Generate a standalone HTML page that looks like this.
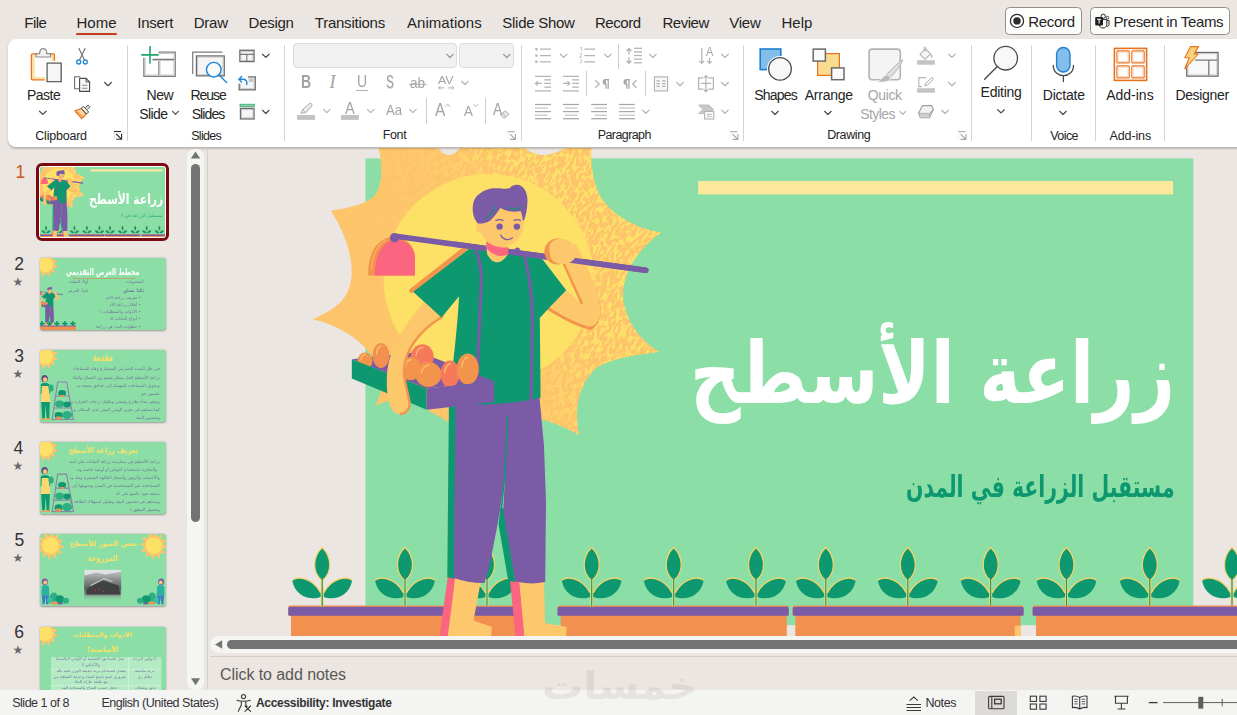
<!DOCTYPE html>
<html lang="en"><head><meta charset="utf-8"><title>PowerPoint</title>
<style>
*{margin:0;padding:0;box-sizing:border-box}
html,body{width:1237px;height:715px;overflow:hidden;background:#ebe6e2;font-family:"Liberation Sans",sans-serif}
#app{position:relative;width:1237px;height:715px;overflow:hidden;background:#ebe6e2}
.t{position:absolute;white-space:nowrap}
.abs{position:absolute}
.ar{font-family:"DejaVu Sans","Liberation Sans",sans-serif;direction:rtl}
svg{position:absolute;overflow:hidden}
svg text{font-family:"Liberation Sans",sans-serif}
svg text.ar{font-family:"DejaVu Sans","Liberation Sans",sans-serif}
</style></head>
<body><div id="app">
<svg style="left:208px;top:148px" width="1029" height="488" viewBox="208 148 1029 488">
<defs><linearGradient id="sg" gradientUnits="userSpaceOnUse" x1="380" y1="330" x2="640" y2="180"><stop offset="0" stop-color="#fdc46b"/><stop offset=".55" stop-color="#fdc66a"/><stop offset="1" stop-color="#fdd468"/></linearGradient><clipPath id="sunclip"><path id="sunp" d="M661 232.8C635 228 612 215 600 196C592 180 590 160 592 140L585 130C570 148 555 155 543 155C531 155 521 148 512 130L470 130C462 148 456 155 449 155C442 155 436 148 428 130L372 120C380 150 386 175 376 194C368 204 350 208 330.7 210.7C345 232 356 262 350 285C346 300 335 310 312.4 319.3C340 325 372 345 380 372C383 385 380 397 375 406C392 396 410 400 426 409L480 440C505 425 530 417 543.5 420C558 424 570 430 579 435C574 410 578 385 596 368C612 358 635 355 659 351.7C640 340 626 322 623 298C622 275 636 250 661 232.8Z"/></clipPath><filter id="spk" x="0" y="0" width="100%" height="100%" color-interpolation-filters="sRGB"><feTurbulence type="fractalNoise" baseFrequency="0.16 0.34" numOctaves="2" seed="7" result="n"/><feColorMatrix in="n" type="matrix" values="0 0 0 0 0.992  0 0 0 0 0.882  0 0 0 0 0.41  11 0 0 0 -5.3"/></filter><linearGradient id="mg" gradientUnits="userSpaceOnUse" x1="330" y1="330" x2="640" y2="200"><stop offset="0" stop-color="#fff" stop-opacity=".03"/><stop offset=".45" stop-color="#fff" stop-opacity=".22"/><stop offset=".7" stop-color="#fff" stop-opacity=".95"/><stop offset="1" stop-color="#fff" stop-opacity="1"/></linearGradient><mask id="spm" maskUnits="userSpaceOnUse" x="300" y="100" width="380" height="360"><rect x="300" y="100" width="380" height="360" fill="url(#mg)"/></mask></defs>
<g id="art">
<rect x="365.4" y="158.4" width="827.9" height="466.8" fill="#8bdfa6"/>
<rect x="698.2" y="181" width="474.8" height="13.4" fill="#fde99b"/>
<use href="#sunp" fill="#fdc46b"/>
<g clip-path="url(#sunclip)"><g mask="url(#spm)"><g transform="rotate(-62 488 279)"><rect x="250" y="40" width="480" height="480" filter="url(#spk)"/></g></g></g>
<circle cx="488.5" cy="279" r="105" fill="#fde066"/>
<rect x="291" y="612" width="228" height="30" fill="#f2904f"/><rect x="288.3" y="605.4" width="233.7" height="10.4" rx="1.6" fill="#f2904f"/><rect x="288.3" y="606.8" width="233.7" height="9" rx="1.6" fill="#7b5aa6"/>
<rect x="560.7" y="612" width="226.0999999999999" height="30" fill="#f2904f"/><rect x="557.5" y="605.4" width="231.29999999999995" height="10.4" rx="1.6" fill="#f2904f"/><rect x="557.5" y="606.8" width="231.29999999999995" height="9" rx="1.6" fill="#7b5aa6"/>
<path d="M457.0 580.5C460.0 576.0 477.0 576.5 485.6 592.9L485.6 597.0C475.0 601.0 460.0 596.5 457.0 580.5Z" fill="#0d9870"/><path d="M457.0 580.5C460.0 576.0 477.0 576.5 485.6 592.9" fill="none" stroke="#fdd368" stroke-width="1.3"/><path d="M517.0 580.5C514.0 576.0 497.0 576.5 488.4 592.9L488.4 597.0C499.0 601.0 514.0 596.5 517.0 580.5Z" fill="#0d9870"/><path d="M517.0 580.5C514.0 576.0 497.0 576.5 488.4 592.9" fill="none" stroke="#fdd368" stroke-width="1.3"/><path d="M487 547.5C496.5 556.5 497.5 572.5 487 580.5C476.5 572.5 477.5 556.5 487 547.5Z" fill="#0d9870" stroke="#fdd368" stroke-width="1.2"/><path d="M487 579.5V606.5" stroke="#fdd368" stroke-width="2.8" fill="none"/><path d="M487 577.5V606.5" stroke="#0d9870" stroke-width="1.1" fill="none"/>
<g id="man"><path d="M368 275.5C368.5 255 374 241 391 236.8L399 238C410 240 415 249 415 258V275.5Z" fill="#f2944c"/><path d="M374.5 275.5C375 257 380 244 394 239C408 240 415 249 415 258V275.5Z" fill="#fb6580"/><path d="M371.3 270C372 256 376 245 387 239.5" stroke="#fdb06a" stroke-width="1.2" fill="none"/><path d="M394 236L645.8 270.3" stroke="#7b5aa6" stroke-width="5.6" stroke-linecap="round"/><circle cx="394.5" cy="237.8" r="4.6" fill="#7b5aa6"/><path d="M448 575L439 640H447.6L456 575Z" fill="#fb6580"/><path d="M455.5 575L447.3 640H490.8L492 627L473.5 620.5L482 575Z" fill="#fdc76b"/><path d="M509.7 578L516 640H525L519.3 578Z" fill="#fb6580"/><path d="M519 578L524.8 640H566L566.6 627L545 623L544 578Z" fill="#fdc76b"/><path d="M449 395L447.3 577Q450 578 454 578.5L457 395Z" fill="#0d9870"/><path d="M455.7 392L453.8 578Q470 583.5 484.5 583L490 563.4L497 527L500 510.3L505 474L507.8 415.2V392Z" fill="#7b5aa6"/><path d="M500.5 508L498.5 524.3L508.3 581L515.6 582L503.5 508Z" fill="#0d9870"/><path d="M507 392L507.3 415.2L505.2 474L503.2 510.3L515.3 581.6Q530 585 545.2 582L546 502L544 446L539 392Z" fill="#7b5aa6"/><path d="M507.6 415.2L505 474L501 512" stroke="#0d9870" stroke-width="1.5" fill="none"/><path d="M599 300C603 312 600 326 590.5 330C577 327 560 318 547 309.5L548 305L590 322Z" fill="#f2944c"/><path d="M575 243C586 262 598 290 600.5 308C601.5 320 595 327.5 588 326.5C575 322 560 315 547 306L566.2 290.2L582.4 304.9L562.5 262Z" fill="#fdc76b"/><path d="M563.2 262.5L582 304" stroke="#f2944c" stroke-width="2.4" fill="none"/><path d="M411.8 290.6L466.5 247.6" stroke="#f2944c" stroke-width="4.4" stroke-linecap="round"/><path d="M469.3 249L413.4 291.7L441.4 317.5L459 296C458 320 455 345 453 365L450.5 400L476.6 404.6C500 404.5 522 402 540.6 397.5L539.8 318L549.2 307.8L566.2 290.2L542.7 259.4L516.3 249.5L508 251L497 262.3L487 251Z" fill="#0d9870"/><path d="M475.7 250.6C481 262 482 275 481 288.8L478 359.3L476.8 404" stroke="#7b5aa6" stroke-width="3.2" fill="none"/><path d="M523.6 253C530 275 532 295 532.4 318L531 400" stroke="#7b5aa6" stroke-width="3.2" fill="none"/><path d="M351.8 359.3L419.3 352L494.2 381.3L426.7 388.6Z" fill="#7b5aa6"/><ellipse cx="365" cy="361" rx="7.5" ry="8.5" fill="#f2944c"/><path d="M360.9 360.1C361.2 356.8 363.1 354.9 365.4 354.4" stroke="#fdc06a" stroke-width="1.3" fill="none" stroke-linecap="round"/><ellipse cx="381" cy="355.5" rx="8.5" ry="12.5" fill="#f2904f"/><path d="M376.3 354.2C376.8 349.2 378.9 346.5 381.4 345.8" stroke="#fdc06a" stroke-width="1.3" fill="none" stroke-linecap="round"/><ellipse cx="422.3" cy="356.8" rx="11.5" ry="12.5" fill="#f6795c"/><path d="M416.0 355.6C416.6 350.6 419.4 347.8 422.9 347.1" stroke="#fdc06a" stroke-width="1.3" fill="none" stroke-linecap="round"/><ellipse cx="410.5" cy="368.5" rx="10.5" ry="11.5" fill="#f2944c"/><path d="M404.7 367.4C405.2 362.8 407.9 360.2 411.0 359.5" stroke="#fdc06a" stroke-width="1.3" fill="none" stroke-linecap="round"/><ellipse cx="428.5" cy="374.5" rx="13" ry="12.5" fill="#f2944c"/><path d="M421.4 373.2C422.0 368.2 425.2 365.5 429.1 364.8" stroke="#fdc06a" stroke-width="1.3" fill="none" stroke-linecap="round"/><ellipse cx="450" cy="374" rx="9.5" ry="13.5" fill="#f6795c"/><path d="M444.8 372.6C445.2 367.2 447.6 364.3 450.5 363.5" stroke="#fdc06a" stroke-width="1.3" fill="none" stroke-linecap="round"/><ellipse cx="467.8" cy="369" rx="11" ry="15.5" fill="#f2944c"/><path d="M461.8 367.4C462.3 361.2 465.1 357.8 468.4 356.9" stroke="#fdc06a" stroke-width="1.3" fill="none" stroke-linecap="round"/><path d="M351.8 359.3L426.7 388.6V409.8L351.8 378.4Z" fill="#0d9870"/><path d="M426.7 388.6L494.2 381.3V401.9L426.7 409.8Z" fill="#7b5aa6"/><path d="M425.2 301C405 323 388 350 387 375C386 390 388 405 393 411C398 416 406 414.5 409 407C410.5 400 404 385 403.2 371C404 350 420 330 443 316Z" fill="#fdc76b"/><path d="M442 317C420 330 404.5 350 403.8 371C404.5 385 409 395 409.6 404C409.5 409 406 413.5 401 414" stroke="#f2944c" stroke-width="2.4" fill="none" stroke-linecap="round"/><path d="M411.8 290.6L466.5 247.6" stroke="#f2944c" stroke-width="4.4" stroke-linecap="round"/><path d="M469.3 249L413.4 291.7L441.4 317.5L459 296L475 270Z" fill="#0d9870"/><path d="M455 244.2L489 249M506 251.4L645.8 270.3" stroke="#7b5aa6" stroke-width="5.6" stroke-linecap="round"/><circle cx="517.3" cy="250" r="2.6" fill="#7b5aa6"/><path d="M486 238L487 254C490 260 494 262.3 497 262.3C501 262.3 505 259 508 254V240Z" fill="#fdc76b"/><path d="M486 241.2C492 246 500 248 508.3 247.5V254.5C503 256.5 498.5 256.2 496 255C492 253.5 488.5 251 487 248.6Z" fill="#fb6580"/><path d="M479 212C476 222 477 226 479.5 229C481 233 484 239 489 242.5C496 247 506 247.5 513 243.5C519 240 523 233 523.8 222L522 206L498 203Z" fill="#fdc76b"/><ellipse cx="479.6" cy="228.5" rx="3.4" ry="4" fill="#fdc76b"/><path d="M472.7 210C472.5 202 475 197 478.6 194.5C484 190 490 188.3 495.4 188.3C501 188 505 189.5 509.7 188.3C511 186 514 184.6 517.2 184.7C523 185 527 191 527.4 198.5C527.8 207 526 215 524 220.4L522.6 220C522.6 216 521.6 213 520.6 211C514 213 505 211 500.4 207.8C497 213 494 217 490.4 220.4C486 223 481 224 477.8 223.4C474.5 220 473 215 472.7 210Z" fill="#7b5aa6"/><path d="M486 218C490 215.5 493.5 211.5 495.5 206M508 207.5C512 209.5 517 209.5 521 207.5" stroke="#0d9870" stroke-width="1.1" fill="none" stroke-linecap="round"/><circle cx="499.6" cy="226.6" r="3.2" fill="#7b5aa6"/><circle cx="516.9" cy="226.6" r="3.2" fill="#7b5aa6"/><path d="M496 220.6C498 219.4 501 219.4 503 220.4M514 220.4C516 219.4 518.5 219.4 520.5 220.6M500.6 235C502.5 239.6 508.5 241 512.6 237.8" stroke="#7b5aa6" stroke-width="1.2" fill="none" stroke-linecap="round"/><ellipse cx="557.5" cy="251.6" rx="13.2" ry="13" fill="#f2944c"/><path d="M550 244C553 239 560 237.6 566 239.5C572 241.5 576 246 576.5 251C577 257 573 262 567 263.6C561 265 554 263.5 551.5 259C549.5 254.5 548.5 248 550 244Z" fill="#fdc76b"/></g>
<path d="M292.2 580.5C295.2 576.0 312.2 576.5 320.8 592.9L320.8 597.0C310.2 601.0 295.2 596.5 292.2 580.5Z" fill="#0d9870"/><path d="M292.2 580.5C295.2 576.0 312.2 576.5 320.8 592.9" fill="none" stroke="#fdd368" stroke-width="1.3"/><path d="M352.2 580.5C349.2 576.0 332.2 576.5 323.6 592.9L323.6 597.0C334.2 601.0 349.2 596.5 352.2 580.5Z" fill="#0d9870"/><path d="M352.2 580.5C349.2 576.0 332.2 576.5 323.6 592.9" fill="none" stroke="#fdd368" stroke-width="1.3"/><path d="M322.2 547.5C331.7 556.5 332.7 572.5 322.2 580.5C311.7 572.5 312.7 556.5 322.2 547.5Z" fill="#0d9870" stroke="#fdd368" stroke-width="1.2"/><path d="M322.2 579.5V606.5" stroke="#fdd368" stroke-width="2.8" fill="none"/><path d="M322.2 577.5V606.5" stroke="#0d9870" stroke-width="1.1" fill="none"/>
<path d="M375.0 580.5C378.0 576.0 395.0 576.5 403.6 592.9L403.6 597.0C393.0 601.0 378.0 596.5 375.0 580.5Z" fill="#0d9870"/><path d="M375.0 580.5C378.0 576.0 395.0 576.5 403.6 592.9" fill="none" stroke="#fdd368" stroke-width="1.3"/><path d="M435.0 580.5C432.0 576.0 415.0 576.5 406.4 592.9L406.4 597.0C417.0 601.0 432.0 596.5 435.0 580.5Z" fill="#0d9870"/><path d="M435.0 580.5C432.0 576.0 415.0 576.5 406.4 592.9" fill="none" stroke="#fdd368" stroke-width="1.3"/><path d="M405 547.5C414.5 556.5 415.5 572.5 405 580.5C394.5 572.5 395.5 556.5 405 547.5Z" fill="#0d9870" stroke="#fdd368" stroke-width="1.2"/><path d="M405 579.5V606.5" stroke="#fdd368" stroke-width="2.8" fill="none"/><path d="M405 577.5V606.5" stroke="#0d9870" stroke-width="1.1" fill="none"/>
<path d="M561.7 580.5C564.7 576.0 581.7 576.5 590.3 592.9L590.3 597.0C579.7 601.0 564.7 596.5 561.7 580.5Z" fill="#0d9870"/><path d="M561.7 580.5C564.7 576.0 581.7 576.5 590.3 592.9" fill="none" stroke="#fdd368" stroke-width="1.3"/><path d="M621.7 580.5C618.7 576.0 601.7 576.5 593.1 592.9L593.1 597.0C603.7 601.0 618.7 596.5 621.7 580.5Z" fill="#0d9870"/><path d="M621.7 580.5C618.7 576.0 601.7 576.5 593.1 592.9" fill="none" stroke="#fdd368" stroke-width="1.3"/><path d="M591.7 547.5C601.2 556.5 602.2 572.5 591.7 580.5C581.2 572.5 582.2 556.5 591.7 547.5Z" fill="#0d9870" stroke="#fdd368" stroke-width="1.2"/><path d="M591.7 579.5V606.5" stroke="#fdd368" stroke-width="2.8" fill="none"/><path d="M591.7 577.5V606.5" stroke="#0d9870" stroke-width="1.1" fill="none"/>
<path d="M643.7 580.5C646.7 576.0 663.7 576.5 672.3 592.9L672.3 597.0C661.7 601.0 646.7 596.5 643.7 580.5Z" fill="#0d9870"/><path d="M643.7 580.5C646.7 576.0 663.7 576.5 672.3 592.9" fill="none" stroke="#fdd368" stroke-width="1.3"/><path d="M703.7 580.5C700.7 576.0 683.7 576.5 675.1 592.9L675.1 597.0C685.7 601.0 700.7 596.5 703.7 580.5Z" fill="#0d9870"/><path d="M703.7 580.5C700.7 576.0 683.7 576.5 675.1 592.9" fill="none" stroke="#fdd368" stroke-width="1.3"/><path d="M673.7 547.5C683.2 556.5 684.2 572.5 673.7 580.5C663.2 572.5 664.2 556.5 673.7 547.5Z" fill="#0d9870" stroke="#fdd368" stroke-width="1.2"/><path d="M673.7 579.5V606.5" stroke="#fdd368" stroke-width="2.8" fill="none"/><path d="M673.7 577.5V606.5" stroke="#0d9870" stroke-width="1.1" fill="none"/>
<path d="M726.0 580.5C729.0 576.0 746.0 576.5 754.6 592.9L754.6 597.0C744.0 601.0 729.0 596.5 726.0 580.5Z" fill="#0d9870"/><path d="M726.0 580.5C729.0 576.0 746.0 576.5 754.6 592.9" fill="none" stroke="#fdd368" stroke-width="1.3"/><path d="M786.0 580.5C783.0 576.0 766.0 576.5 757.4 592.9L757.4 597.0C768.0 601.0 783.0 596.5 786.0 580.5Z" fill="#0d9870"/><path d="M786.0 580.5C783.0 576.0 766.0 576.5 757.4 592.9" fill="none" stroke="#fdd368" stroke-width="1.3"/><path d="M756 547.5C765.5 556.5 766.5 572.5 756 580.5C745.5 572.5 746.5 556.5 756 547.5Z" fill="#0d9870" stroke="#fdd368" stroke-width="1.2"/><path d="M756 579.5V606.5" stroke="#fdd368" stroke-width="2.8" fill="none"/><path d="M756 577.5V606.5" stroke="#0d9870" stroke-width="1.1" fill="none"/>
<path d="M795.8 580.5C798.8 576.0 815.8 576.5 824.4 592.9L824.4 597.0C813.8 601.0 798.8 596.5 795.8 580.5Z" fill="#0d9870"/><path d="M795.8 580.5C798.8 576.0 815.8 576.5 824.4 592.9" fill="none" stroke="#fdd368" stroke-width="1.3"/><path d="M855.8 580.5C852.8 576.0 835.8 576.5 827.2 592.9L827.2 597.0C837.8 601.0 852.8 596.5 855.8 580.5Z" fill="#0d9870"/><path d="M855.8 580.5C852.8 576.0 835.8 576.5 827.2 592.9" fill="none" stroke="#fdd368" stroke-width="1.3"/><path d="M825.8 547.5C835.3 556.5 836.3 572.5 825.8 580.5C815.3 572.5 816.3 556.5 825.8 547.5Z" fill="#0d9870" stroke="#fdd368" stroke-width="1.2"/><path d="M825.8 579.5V606.5" stroke="#fdd368" stroke-width="2.8" fill="none"/><path d="M825.8 577.5V606.5" stroke="#0d9870" stroke-width="1.1" fill="none"/>
<path d="M877.8 580.5C880.8 576.0 897.8 576.5 906.4 592.9L906.4 597.0C895.8 601.0 880.8 596.5 877.8 580.5Z" fill="#0d9870"/><path d="M877.8 580.5C880.8 576.0 897.8 576.5 906.4 592.9" fill="none" stroke="#fdd368" stroke-width="1.3"/><path d="M937.8 580.5C934.8 576.0 917.8 576.5 909.2 592.9L909.2 597.0C919.8 601.0 934.8 596.5 937.8 580.5Z" fill="#0d9870"/><path d="M937.8 580.5C934.8 576.0 917.8 576.5 909.2 592.9" fill="none" stroke="#fdd368" stroke-width="1.3"/><path d="M907.8 547.5C917.3 556.5 918.3 572.5 907.8 580.5C897.3 572.5 898.3 556.5 907.8 547.5Z" fill="#0d9870" stroke="#fdd368" stroke-width="1.2"/><path d="M907.8 579.5V606.5" stroke="#fdd368" stroke-width="2.8" fill="none"/><path d="M907.8 577.5V606.5" stroke="#0d9870" stroke-width="1.1" fill="none"/>
<path d="M960.7 580.5C963.7 576.0 980.7 576.5 989.3 592.9L989.3 597.0C978.7 601.0 963.7 596.5 960.7 580.5Z" fill="#0d9870"/><path d="M960.7 580.5C963.7 576.0 980.7 576.5 989.3 592.9" fill="none" stroke="#fdd368" stroke-width="1.3"/><path d="M1020.7 580.5C1017.7 576.0 1000.7 576.5 992.1 592.9L992.1 597.0C1002.7 601.0 1017.7 596.5 1020.7 580.5Z" fill="#0d9870"/><path d="M1020.7 580.5C1017.7 576.0 1000.7 576.5 992.1 592.9" fill="none" stroke="#fdd368" stroke-width="1.3"/><path d="M990.7 547.5C1000.2 556.5 1001.2 572.5 990.7 580.5C980.2 572.5 981.2 556.5 990.7 547.5Z" fill="#0d9870" stroke="#fdd368" stroke-width="1.2"/><path d="M990.7 579.5V606.5" stroke="#fdd368" stroke-width="2.8" fill="none"/><path d="M990.7 577.5V606.5" stroke="#0d9870" stroke-width="1.1" fill="none"/>
<path d="M1036.5 580.5C1039.5 576.0 1056.5 576.5 1065.1 592.9L1065.1 597.0C1054.5 601.0 1039.5 596.5 1036.5 580.5Z" fill="#0d9870"/><path d="M1036.5 580.5C1039.5 576.0 1056.5 576.5 1065.1 592.9" fill="none" stroke="#fdd368" stroke-width="1.3"/><path d="M1096.5 580.5C1093.5 576.0 1076.5 576.5 1067.9 592.9L1067.9 597.0C1078.5 601.0 1093.5 596.5 1096.5 580.5Z" fill="#0d9870"/><path d="M1096.5 580.5C1093.5 576.0 1076.5 576.5 1067.9 592.9" fill="none" stroke="#fdd368" stroke-width="1.3"/><path d="M1066.5 547.5C1076.0 556.5 1077.0 572.5 1066.5 580.5C1056.0 572.5 1057.0 556.5 1066.5 547.5Z" fill="#0d9870" stroke="#fdd368" stroke-width="1.2"/><path d="M1066.5 579.5V606.5" stroke="#fdd368" stroke-width="2.8" fill="none"/><path d="M1066.5 577.5V606.5" stroke="#0d9870" stroke-width="1.1" fill="none"/>
<path d="M1119.8 580.5C1122.8 576.0 1139.8 576.5 1148.4 592.9L1148.4 597.0C1137.8 601.0 1122.8 596.5 1119.8 580.5Z" fill="#0d9870"/><path d="M1119.8 580.5C1122.8 576.0 1139.8 576.5 1148.4 592.9" fill="none" stroke="#fdd368" stroke-width="1.3"/><path d="M1179.8 580.5C1176.8 576.0 1159.8 576.5 1151.2 592.9L1151.2 597.0C1161.8 601.0 1176.8 596.5 1179.8 580.5Z" fill="#0d9870"/><path d="M1179.8 580.5C1176.8 576.0 1159.8 576.5 1151.2 592.9" fill="none" stroke="#fdd368" stroke-width="1.3"/><path d="M1149.8 547.5C1159.3 556.5 1160.3 572.5 1149.8 580.5C1139.3 572.5 1140.3 556.5 1149.8 547.5Z" fill="#0d9870" stroke="#fdd368" stroke-width="1.2"/><path d="M1149.8 579.5V606.5" stroke="#fdd368" stroke-width="2.8" fill="none"/><path d="M1149.8 577.5V606.5" stroke="#0d9870" stroke-width="1.1" fill="none"/>
<path d="M1202.0 580.5C1205.0 576.0 1222.0 576.5 1230.6 592.9L1230.6 597.0C1220.0 601.0 1205.0 596.5 1202.0 580.5Z" fill="#0d9870"/><path d="M1202.0 580.5C1205.0 576.0 1222.0 576.5 1230.6 592.9" fill="none" stroke="#fdd368" stroke-width="1.3"/><path d="M1262.0 580.5C1259.0 576.0 1242.0 576.5 1233.4 592.9L1233.4 597.0C1244.0 601.0 1259.0 596.5 1262.0 580.5Z" fill="#0d9870"/><path d="M1262.0 580.5C1259.0 576.0 1242.0 576.5 1233.4 592.9" fill="none" stroke="#fdd368" stroke-width="1.3"/><path d="M1232 547.5C1241.5 556.5 1242.5 572.5 1232 580.5C1221.5 572.5 1222.5 556.5 1232 547.5Z" fill="#0d9870" stroke="#fdd368" stroke-width="1.2"/><path d="M1232 579.5V606.5" stroke="#fdd368" stroke-width="2.8" fill="none"/><path d="M1232 577.5V606.5" stroke="#0d9870" stroke-width="1.1" fill="none"/>
<rect x="795.3" y="612" width="225.20000000000005" height="30" fill="#f2904f"/><rect x="792.7" y="605.4" width="230.89999999999998" height="10.4" rx="1.6" fill="#f2904f"/><rect x="792.7" y="606.8" width="230.89999999999998" height="9" rx="1.6" fill="#7b5aa6"/>
<rect x="1036" y="612" width="214" height="30" fill="#f2904f"/><rect x="1032.6" y="605.4" width="217.4000000000001" height="10.4" rx="1.6" fill="#f2904f"/><rect x="1032.6" y="606.8" width="217.4000000000001" height="9" rx="1.6" fill="#7b5aa6"/>
<rect x="1014.8" y="625.7" width="6" height="12" fill="#fdc76b"/>
</g>
</svg>
<div class="t ar" style="left:689.5px;top:322px;font-size:86px;line-height:103.2px;font-weight:bold;color:#fff;transform-origin:0 0;transform:scaleX(.8177)">زراعة الأسطح</div>
<div class="t ar" style="left:905.8px;top:469.4px;font-size:30px;line-height:36px;font-weight:bold;color:#0d9870;transform-origin:0 0;transform:scaleX(.681)">مستقبل الزراعة في المدن</div>

<div class="abs" style="left:0;top:0;width:1237px;height:40px;background:#ebe6e2"></div>
<div class="t" style="left:24.3px;top:13.7px;font-size:15px;line-height:18.0px;color:#242424;letter-spacing:-0.52px;">File</div>
<div class="t" style="left:76.4px;top:13.7px;font-size:15px;line-height:18.0px;color:#242424;letter-spacing:0.10px;">Home</div>
<div class="t" style="left:137.3px;top:13.7px;font-size:15px;line-height:18.0px;color:#242424;letter-spacing:-0.30px;">Insert</div>
<div class="t" style="left:193.7px;top:13.7px;font-size:15px;line-height:18.0px;color:#242424;letter-spacing:-0.23px;">Draw</div>
<div class="t" style="left:248.6px;top:13.7px;font-size:15px;line-height:18.0px;color:#242424;letter-spacing:-0.27px;">Design</div>
<div class="t" style="left:314.8px;top:13.7px;font-size:15px;line-height:18.0px;color:#242424;letter-spacing:-0.24px;">Transitions</div>
<div class="t" style="left:407.0px;top:13.7px;font-size:15px;line-height:18.0px;color:#242424;letter-spacing:0.05px;">Animations</div>
<div class="t" style="left:502.3px;top:13.7px;font-size:15px;line-height:18.0px;color:#242424;letter-spacing:-0.27px;">Slide Show</div>
<div class="t" style="left:595.0px;top:13.7px;font-size:15px;line-height:18.0px;color:#242424;letter-spacing:-0.46px;">Record</div>
<div class="t" style="left:662.4px;top:13.7px;font-size:15px;line-height:18.0px;color:#242424;letter-spacing:-0.46px;">Review</div>
<div class="t" style="left:729.2px;top:13.7px;font-size:15px;line-height:18.0px;color:#242424;letter-spacing:-0.21px;">View</div>
<div class="t" style="left:781.6px;top:13.7px;font-size:15px;line-height:18.0px;color:#242424;letter-spacing:-0.06px;">Help</div>
<div class="abs" style="left:76px;top:32.6px;width:41px;height:2.6px;background:#c43e1c;border-radius:1px"></div>
<div class="abs" style="left:1005px;top:7.3px;width:76.5px;height:27.4px;border:1px solid #918e8b;border-radius:4.5px;background:#fdfdfc"></div>
<div class="abs" style="left:1090.2px;top:7.3px;width:139.8px;height:27.4px;border:1px solid #918e8b;border-radius:4.5px;background:#fdfdfc"></div>
<div class="t" style="left:1028.3px;top:12.7px;font-size:15px;line-height:18.0px;color:#242424;letter-spacing:-0.31px;">Record</div>
<div class="t" style="left:1113.4px;top:12.7px;font-size:15px;line-height:18.0px;color:#242424;letter-spacing:-0.36px;">Present in Teams</div>
<div class="abs" style="left:8px;top:39px;width:1240px;height:107.5px;background:#fff;border-radius:8px;box-shadow:0 1.2px 2px rgba(0,0,0,.2)"></div>
<div class="abs" style="left:127.3px;top:44.5px;width:1px;height:96px;background:#d6d3d0"></div>
<div class="abs" style="left:284.0px;top:44.5px;width:1px;height:96px;background:#d6d3d0"></div>
<div class="abs" style="left:520.9px;top:44.5px;width:1px;height:96px;background:#d6d3d0"></div>
<div class="abs" style="left:743.0px;top:44.5px;width:1px;height:96px;background:#d6d3d0"></div>
<div class="abs" style="left:971.3px;top:44.5px;width:1px;height:96px;background:#d6d3d0"></div>
<div class="abs" style="left:1031.1px;top:44.5px;width:1px;height:96px;background:#d6d3d0"></div>
<div class="abs" style="left:1095.0px;top:44.5px;width:1px;height:96px;background:#d6d3d0"></div>
<div class="abs" style="left:1163.9px;top:44.5px;width:1px;height:96px;background:#d6d3d0"></div>
<div class="abs" style="left:426.1px;top:98.4px;width:1px;height:25.599999999999994px;background:#d0cdca"></div>
<div class="abs" style="left:485.0px;top:98.4px;width:1px;height:25.599999999999994px;background:#d0cdca"></div>
<div class="abs" style="left:617.8px;top:43.8px;width:1px;height:25.0px;background:#d0cdca"></div>
<div class="abs" style="left:585.9px;top:71.3px;width:1px;height:25.10000000000001px;background:#d0cdca"></div>
<div class="abs" style="left:644.8px;top:71.3px;width:1px;height:25.10000000000001px;background:#d0cdca"></div>
<div class="abs" style="left:293px;top:43.3px;width:163.7px;height:24.4px;background:#f1f1f1;border:1px solid #dcdcdc;border-radius:4px"></div>
<div class="abs" style="left:459.4px;top:43.3px;width:54.4px;height:24.4px;background:#f1f1f1;border:1px solid #dcdcdc;border-radius:4px"></div>
<div class="t" style="left:27.0px;top:86.5px;font-size:14px;line-height:16.8px;color:#242424;letter-spacing:-0.52px;">Paste</div>
<div class="t" style="left:146.6px;top:86.5px;font-size:14px;line-height:16.8px;color:#242424;letter-spacing:-0.54px;">New</div>
<div class="t" style="left:139.3px;top:105.5px;font-size:14px;line-height:16.8px;color:#242424;letter-spacing:-0.61px;">Slide</div>
<div class="t" style="left:190.5px;top:86.5px;font-size:14px;line-height:16.8px;color:#242424;letter-spacing:-1.07px;">Reuse</div>
<div class="t" style="left:191.7px;top:105.5px;font-size:14px;line-height:16.8px;color:#242424;letter-spacing:-0.91px;">Slides</div>
<div class="t" style="left:754.3px;top:86.8px;font-size:14px;line-height:16.8px;color:#242424;letter-spacing:-0.80px;">Shapes</div>
<div class="t" style="left:804.7px;top:86.8px;font-size:14px;line-height:16.8px;color:#242424;letter-spacing:-0.23px;">Arrange</div>
<div class="t" style="left:867.8px;top:86.8px;font-size:14px;line-height:16.8px;color:#a6a6a6;letter-spacing:-0.38px;">Quick</div>
<div class="t" style="left:860.3px;top:105.7px;font-size:14px;line-height:16.8px;color:#a6a6a6;letter-spacing:-0.59px;">Styles</div>
<div class="t" style="left:980.6px;top:84.4px;font-size:14px;line-height:16.8px;color:#242424;letter-spacing:-0.27px;">Editing</div>
<div class="t" style="left:1042.8px;top:86.5px;font-size:14px;line-height:16.8px;color:#242424;letter-spacing:-0.24px;">Dictate</div>
<div class="t" style="left:1106.2px;top:86.5px;font-size:14px;line-height:16.8px;color:#242424;letter-spacing:0.00px;">Add-ins</div>
<div class="t" style="left:1175.4px;top:86.5px;font-size:14px;line-height:16.8px;color:#242424;letter-spacing:-0.34px;">Designer</div>
<div class="t" style="left:35.3px;top:128.6px;font-size:12.5px;line-height:15.0px;color:#242424;letter-spacing:-0.22px;">Clipboard</div>
<div class="t" style="left:191.2px;top:129.0px;font-size:12.5px;line-height:15.0px;color:#242424;letter-spacing:-0.71px;">Slides</div>
<div class="t" style="left:382.8px;top:128.1px;font-size:12.5px;line-height:15.0px;color:#242424;letter-spacing:-0.40px;">Font</div>
<div class="t" style="left:597.7px;top:128.1px;font-size:12.5px;line-height:15.0px;color:#242424;letter-spacing:-0.58px;">Paragraph</div>
<div class="t" style="left:827.2px;top:128.1px;font-size:12.5px;line-height:15.0px;color:#242424;letter-spacing:-0.38px;">Drawing</div>
<div class="t" style="left:1050.2px;top:128.7px;font-size:12.5px;line-height:15.0px;color:#242424;letter-spacing:-0.56px;">Voice</div>
<div class="t" style="left:1109.6px;top:128.7px;font-size:12.5px;line-height:15.0px;color:#242424;letter-spacing:-0.14px;">Add-ins</div>
<svg style="left:0;top:0" width="1237" height="148" viewBox="0 0 1237 148" fill="none">
<circle cx="1017" cy="20.9" r="6.6" stroke="#2b2b2b" stroke-width="1.2"/><circle cx="1017" cy="20.9" r="3.7" fill="#2b2b2b"/>
<circle cx="1103.2" cy="16.3" r="2.2" stroke="#2b2b2b" stroke-width="1"/><circle cx="1107.4" cy="17.6" r="1.3" stroke="#2b2b2b" stroke-width=".9"/><path d="M1099.5 19.6H1106.8V24.6C1106.8 27 1104.8 28 1103 28C1101 28 1099.5 26.8 1099.5 25ZM1107 20.4H1109V24.4C1109 25.6 1108 26.4 1107 26.4" stroke="#2b2b2b" stroke-width="1"/><rect x="1095.2" y="17" width="7.8" height="8.4" rx=".8" fill="#1f1f1f"/><path d="M1097 19.2H1101.2M1099.1 19.2V23.6" stroke="#fff" stroke-width="1.1"/>
<rect x="31.4" y="53.8" width="23" height="26" rx="1" fill="#fbe2a4" stroke="#e8731e" stroke-width="1.3"/><rect x="34.6" y="56.4" width="16.6" height="20.6" fill="#fdfdfd"/>
<path d="M36 57V53.6H39.6C39.8 50.4 41.4 48.7 43.2 48.7C45 48.7 46.6 50.4 46.8 53.6H50.4V57Z" fill="#f3f3f3" stroke="#8c8c8c" stroke-width="1.2" stroke-linejoin="round"/>
<rect x="47" y="63" width="14.2" height="18.8" fill="#f7f7f7" stroke="#4a4a4a" stroke-width="1.3"/><rect x="45.6" y="61.6" width="17" height="21.6" stroke="#fff" stroke-width="1.4"/>
<path d="M39.5 111.2L42.8 114.4L46.1 111.2" stroke="#4a4a4a" stroke-width="1.2" stroke-linecap="round" stroke-linejoin="round"/>
<path d="M79 48.4L84.2 59.4M85 48.4L79.8 59.4" stroke="#6e6e6e" stroke-width="1.1" stroke-linecap="round"/><circle cx="78.7" cy="62" r="2" stroke="#1e86dd" stroke-width="1.3"/><circle cx="85.3" cy="62" r="2" stroke="#1e86dd" stroke-width="1.3"/>
<path d="M79 88.8H74.6V76.8H80.4" stroke="#6e6e6e" stroke-width="1.1"/><path d="M79.6 78.4H86L89.6 82V91.4H79.6Z" fill="#f7f7f7" stroke="#4a4a4a" stroke-width="1.1"/><path d="M86 78.4V82H89.6" stroke="#4a4a4a" stroke-width=".9"/><path d="M82 85.2H87.4M82 88.2H87.4" stroke="#8a8a8a" stroke-width="1.1"/>
<path d="M104.7 82.5L108.0 85.7L111.3 82.5" stroke="#4a4a4a" stroke-width="1.2" stroke-linecap="round" stroke-linejoin="round"/>
<path d="M74.8 110.8L81.4 108.6L86.2 114L81.8 118.6Z" fill="#f9d9a0" stroke="#e8731e" stroke-width="1.2" stroke-linejoin="round"/><path d="M76.8 111.4L82.6 116.6" stroke="#e8731e" stroke-width="1"/>
<path d="M81.2 108.2L83.6 106.4L88.6 112L86.6 114Z" fill="#f3f3f3" stroke="#4a4a4a" stroke-width="1"/><path d="M85.4 107.6L88.2 105.2L89.8 106.8L87 109.6" stroke="#4a4a4a" stroke-width="1" fill="#f3f3f3"/>
<path d="M113.9 131.5H121.0" stroke="#2a2a2a" stroke-width="1.1"/><path d="M114.3 132.2V138.79999999999998" stroke="#2a2a2a" stroke-width=".5" opacity=".35"/><path d="M116.2 134.0L121.2 138.79999999999998M116.2 139.2H121.60000000000001V133.79999999999998" stroke="#2a2a2a" stroke-width="1.1" stroke-linejoin="miter"/>
<path d="M158.4 52.2H175.2V76.3H143.9V57.8" stroke="#7a7a7a" stroke-width="1.3" fill="none"/><path d="M158.4 53.4H174V75.1H145.1V57.8" stroke="#c8c8c8" stroke-width="1.1"/><path d="M152.5 59.4H174M158.9 59.4V75" stroke="#7a7a7a" stroke-width="1.2"/><path d="M152.5 60.5H174M160 60V75" stroke="#c8c8c8" stroke-width="1"/>
<path d="M150 46V63.6M141.2 54.9H158.6" stroke="#21a366" stroke-width="1.6"/>
<path d="M172.6 111.4L175.5 114.3L178.4 111.4" stroke="#4a4a4a" stroke-width="1.2" stroke-linecap="round" stroke-linejoin="round"/>
<path d="M192.7 74V52.2H222.4" stroke="#7a7a7a" stroke-width="1.2"/>
<rect x="196.5" y="56.0" width="27.7" height="19.8" fill="#f5f5f5" stroke="#6c6c6c" stroke-width="1.4"/>
<rect x="197.6" y="57.1" width="25.5" height="17.6" stroke="#c8c8c8" stroke-width="1"/>
<circle cx="213.8" cy="69.7" r="7.3" fill="#fbfbfb" stroke="#1e86dd" stroke-width="1.4"/><path d="M219 75L226.6 82.4" stroke="#1e86dd" stroke-width="1.4" stroke-linecap="round"/>
<rect x="239.9" y="50.3" width="14.1" height="11.2" fill="#f5f5f5" stroke="#6c6c6c" stroke-width="1.4"/>
<rect x="241.0" y="51.4" width="11.9" height="9.0" stroke="#c8c8c8" stroke-width="1"/>
<path d="M240 54.4H254M246.8 54.4V61.4" stroke="#7a7a7a" stroke-width="1.1"/>
<path d="M262.5 54.2L265.8 57.4L269.1 54.2" stroke="#4a4a4a" stroke-width="1.2" stroke-linecap="round" stroke-linejoin="round"/>
<rect x="239.2" y="77.0" width="16.0" height="12.8" fill="#f5f5f5" stroke="#6c6c6c" stroke-width="1.4"/>
<rect x="240.3" y="78.1" width="13.8" height="10.6" stroke="#c8c8c8" stroke-width="1"/>
<rect x="238" y="75.6" width="10" height="8" fill="#fefefe"/><rect x="248.8" y="79" width="4.6" height="3" fill="#c8c8c8"/>
<path d="M239 79.2H243.4C246.2 79.4 247.6 81.6 246.6 84.6M241.6 76.4L238.9 79.2L241.6 82" stroke="#1e86dd" stroke-width="1.4" stroke-linecap="round" stroke-linejoin="round"/>
<rect x="240" y="104.2" width="14.6" height="2.4" fill="#8fd4ad" stroke="#21a366" stroke-width=".7"/>
<rect x="240.5" y="108.4" width="13.5" height="10.5" fill="#f5f5f5" stroke="#6c6c6c" stroke-width="1.4"/>
<rect x="241.6" y="109.5" width="11.3" height="8.3" stroke="#c8c8c8" stroke-width="1"/>
<path d="M262.5 110.3L265.8 113.5L269.1 110.3" stroke="#4a4a4a" stroke-width="1.2" stroke-linecap="round" stroke-linejoin="round"/>
<path d="M446.7 54.3L450.0 57.5L453.3 54.3" stroke="#9a9a9a" stroke-width="1.2" stroke-linecap="round" stroke-linejoin="round"/>
<path d="M503.5 54.3L506.8 57.5L510.1 54.3" stroke="#9a9a9a" stroke-width="1.2" stroke-linecap="round" stroke-linejoin="round"/>
<path d="M356.2 90.5H367.8" stroke="#b3b3b3" stroke-width="1.1"/>
<path d="M409 84.3H426.8" stroke="#b3b3b3" stroke-width="1"/>
<path d="M438.6 87.9H444.6M447.8 87.9H453.8M440.6 85.9L438.6 87.9L440.6 89.9M451.8 85.9L453.8 87.9L451.8 89.9" stroke="#b3b3b3" stroke-width="1"/>
<path d="M461.6 81.3L464.9 84.5L468.2 81.3" stroke="#b3b3b3" stroke-width="1.2" stroke-linecap="round" stroke-linejoin="round"/>
<rect x="297" y="115" width="18" height="4.9" fill="#c2c2c2"/><path d="M301 113.2L302.8 109.6L309.6 103.6C310.6 102.8 312.6 104.6 311.8 105.8L305.4 112.6Z" stroke="#b3b3b3" stroke-width="1.1" stroke-linejoin="round" fill="#f4f4f4"/><path d="M302.8 109.6L305.4 112.6" stroke="#b3b3b3" stroke-width="1"/>
<path d="M323.5 109.4L326.8 112.6L330.1 109.4" stroke="#b3b3b3" stroke-width="1.2" stroke-linecap="round" stroke-linejoin="round"/>
<rect x="341" y="115" width="17.8" height="4.9" fill="#c2c2c2"/>
<path d="M367.4 109.4L370.7 112.6L374.0 109.4" stroke="#b3b3b3" stroke-width="1.2" stroke-linecap="round" stroke-linejoin="round"/>
<path d="M409.6 109.4L412.9 112.6L416.2 109.4" stroke="#b3b3b3" stroke-width="1.2" stroke-linecap="round" stroke-linejoin="round"/>
<path d="M445.6 106.4L447.8 104.4L450 106.4M473.6 104.4L475.7 106.4L477.8 104.4" stroke="#b3b3b3" stroke-width="1" stroke-linecap="round"/>
<path d="M500.2 114.6L505.6 110.8L509.2 114.2L504 118.4Z" fill="#e6e6e6" stroke="#b3b3b3" stroke-width="1" stroke-linejoin="round"/><path d="M502.4 113L505.8 116.8" stroke="#b3b3b3" stroke-width=".9"/>
<path d="M507.7 131.70000000000002H514.8" stroke="#a6a6a6" stroke-width="1.1"/><path d="M508.1 132.4V139.0" stroke="#a6a6a6" stroke-width=".5" opacity=".35"/><path d="M510 134.20000000000002L515 139.0M510 139.4H515.4V134.0" stroke="#a6a6a6" stroke-width="1.1" stroke-linejoin="miter"/>
<rect x="535.3" y="48.1" width="2.3" height="2.3" fill="#b3b3b3"/><path d="M540 49.2H550.8M584.4 49.2H595" stroke="#b3b3b3" stroke-width="1.25"/>
<rect x="535.3" y="54.4" width="2.3" height="2.3" fill="#b3b3b3"/><path d="M540 55.5H550.8M584.4 55.5H595" stroke="#b3b3b3" stroke-width="1.25"/>
<rect x="535.3" y="60.699999999999996" width="2.3" height="2.3" fill="#b3b3b3"/><path d="M540 61.8H550.8M584.4 61.8H595" stroke="#b3b3b3" stroke-width="1.25"/>
<path d="M580.4 47.6L581.6 47V51M579.6 53.8C580.6 53 582 53.4 581.8 54.6L579.6 57.2H582M579.8 60C581 59.4 582 60 581.6 61C582.2 61.6 581.8 63.4 579.6 63" stroke="#b3b3b3" stroke-width=".8"/>
<path d="M560.3 54.2L563.6 57.4L566.9 54.2" stroke="#b3b3b3" stroke-width="1.2" stroke-linecap="round" stroke-linejoin="round"/>
<path d="M604.5 54.2L607.8 57.4L611.1 54.2" stroke="#b3b3b3" stroke-width="1.2" stroke-linecap="round" stroke-linejoin="round"/>
<path d="M649.6 54.2L652.9 57.4L656.2 54.2" stroke="#b3b3b3" stroke-width="1.2" stroke-linecap="round" stroke-linejoin="round"/>
<path d="M629 48.6V54.6M626.6 51L629 48.5L631.4 51M629 57.2V63.2M626.6 60.8L629 63.3L631.4 60.8" stroke="#b3b3b3" stroke-width="1.25" stroke-width="1.1"/>
<path d="M634 48.3H642" stroke="#b3b3b3" stroke-width="1.25"/>
<path d="M634 51.9H642" stroke="#b3b3b3" stroke-width="1.25"/>
<path d="M634 55.5H642" stroke="#b3b3b3" stroke-width="1.25"/>
<path d="M634 59.1H642" stroke="#b3b3b3" stroke-width="1.25"/>
<path d="M634 62.8H642" stroke="#b3b3b3" stroke-width="1.25"/>
<path d="M701.8 48.2V63.2M699.4 60.8L701.8 63.4L704.2 60.8M709.5 58V63.2M707.5 61.2L709.5 63.4L711.5 61.2" stroke="#b3b3b3" stroke-width="1.25" stroke-width="1.1"/>
<path d="M721.7 54.2L725.0 57.4L728.3 54.2" stroke="#b3b3b3" stroke-width="1.2" stroke-linecap="round" stroke-linejoin="round"/>
<path d="M535 76.3H551M535 90.8H551M544.2 79.8H551M544.2 83.4H551M544.2 87H551M535.6 83.4H541.8M537.8 81.2L535.5 83.4L537.8 85.6" stroke="#b3b3b3" stroke-width="1.25"/>
<path d="M563 76.3H579M563 90.8H579M572.2 79.8H579M572.2 83.4H579M572.2 87H579M563 83.4H569.6M567.4 81.2L569.7 83.4L567.4 85.6" stroke="#b3b3b3" stroke-width="1.25"/>
<path d="M595.2 80.2L599.2 84L595.2 87.8M636.6 80.2L632.6 84L636.6 87.8" stroke="#b3b3b3" stroke-width="1.25"/>
<path d="M609.2 79.6H605.4C602.6 79.6 602.6 84.2 605.4 84.2H606V88.8M608.2 79.6V88.8" stroke="#a8a8a8" stroke-width="1.3"/><path d="M606 80H605.4C603.2 80 603.2 83.8 605.4 83.8H606Z" fill="#a8a8a8"/>
<path d="M630.0 79.6H626.1999999999999C623.4 79.6 623.4 84.2 626.1999999999999 84.2H626.8V88.8M629.0 79.6V88.8" stroke="#a8a8a8" stroke-width="1.3"/><path d="M626.8 80H626.1999999999999C624.0 80 624.0 83.8 626.1999999999999 83.8H626.8Z" fill="#a8a8a8"/>
<rect x="654.4" y="76.9" width="13.2" height="14" stroke="#b3b3b3" stroke-width="1.2" fill="#f7f7f7"/>
<path d="M656.4 80.8H659.8M662.2 80.8H665.6" stroke="#b3b3b3" stroke-width="1.25" stroke-width="1"/>
<path d="M656.4 83.6H659.8M662.2 83.6H665.6" stroke="#b3b3b3" stroke-width="1.25" stroke-width="1"/>
<path d="M656.4 86.4H659.8M662.2 86.4H665.6" stroke="#b3b3b3" stroke-width="1.25" stroke-width="1"/>
<path d="M676.7 82.5L680.0 85.7L683.3 82.5" stroke="#b3b3b3" stroke-width="1.2" stroke-linecap="round" stroke-linejoin="round"/>
<path d="M703.4 77.8H698.6V89H703.4M708.4 77.8H713.4V89H708.4" stroke="#b3b3b3" stroke-width="1.25" stroke-width="1.1" stroke-dasharray="none"/><path d="M705.9 75.8V91.6M704 77.6L705.9 75.6L707.8 77.6M704 89.8L705.9 91.8L707.8 89.8M700.8 83.4H711" stroke="#b3b3b3" stroke-width="1.25" stroke-width="1"/>
<path d="M721.7 82.5L725.0 85.7L728.3 82.5" stroke="#b3b3b3" stroke-width="1.2" stroke-linecap="round" stroke-linejoin="round"/>
<path d="M535 104.5H551" stroke="#a6a6a6" stroke-width="1.25"/>
<path d="M535 108H547.7" stroke="#c4c4c4" stroke-width="1.25"/>
<path d="M535 111.6H551" stroke="#a6a6a6" stroke-width="1.25"/>
<path d="M535 115.2H547.7" stroke="#c4c4c4" stroke-width="1.25"/>
<path d="M535 118.7H551" stroke="#a6a6a6" stroke-width="1.25"/>
<path d="M563 104.5H579" stroke="#a6a6a6" stroke-width="1.25"/>
<path d="M564.7 108H577.3" stroke="#c4c4c4" stroke-width="1.25"/>
<path d="M563 111.6H579" stroke="#a6a6a6" stroke-width="1.25"/>
<path d="M564.7 115.2H577.3" stroke="#c4c4c4" stroke-width="1.25"/>
<path d="M563 118.7H579" stroke="#a6a6a6" stroke-width="1.25"/>
<path d="M591.2 104.5H607" stroke="#a6a6a6" stroke-width="1.25"/>
<path d="M594.4 108H607" stroke="#c4c4c4" stroke-width="1.25"/>
<path d="M591.2 111.6H607" stroke="#a6a6a6" stroke-width="1.25"/>
<path d="M594.4 115.2H607" stroke="#c4c4c4" stroke-width="1.25"/>
<path d="M591.2 118.7H607" stroke="#a6a6a6" stroke-width="1.25"/>
<path d="M619.1 104.5H634.9" stroke="#a6a6a6" stroke-width="1.25"/>
<path d="M619.1 108H634.9" stroke="#c4c4c4" stroke-width="1.25"/>
<path d="M619.1 111.6H634.9" stroke="#a6a6a6" stroke-width="1.25"/>
<path d="M619.1 115.2H634.9" stroke="#c4c4c4" stroke-width="1.25"/>
<path d="M619.1 118.7H634.9" stroke="#a6a6a6" stroke-width="1.25"/>
<path d="M642.5 110.1L645.8 113.3L649.1 110.1" stroke="#b3b3b3" stroke-width="1.2" stroke-linecap="round" stroke-linejoin="round"/>
<path d="M698.6 105H708.6L713.6 109.4L708.6 113.6H698.6L703 109.4Z" fill="#c9c9c9" stroke="#b3b3b3" stroke-width=".8"/><rect x="704.6" y="111.4" width="9.2" height="7.6" fill="#f7f7f7" stroke="#b3b3b3" stroke-width="1.1"/><path d="M707 114.4H711.6M707 116.4H711.6" stroke="#b3b3b3" stroke-width=".9"/>
<path d="M721.7 110.1L725.0 113.3L728.3 110.1" stroke="#b3b3b3" stroke-width="1.2" stroke-linecap="round" stroke-linejoin="round"/>
<path d="M730.2 131.70000000000002H737.3" stroke="#a6a6a6" stroke-width="1.1"/><path d="M730.6 132.4V139.0" stroke="#a6a6a6" stroke-width=".5" opacity=".35"/><path d="M732.5 134.20000000000002L737.5 139.0M732.5 139.4H737.9V134.0" stroke="#a6a6a6" stroke-width="1.1" stroke-linejoin="miter"/>
<rect x="760.2" y="49" width="20.6" height="20.6" fill="#83bdea" stroke="#1e7fd0" stroke-width="1.6"/><circle cx="780" cy="68.9" r="13" fill="#fefefe"/><circle cx="780" cy="68.9" r="11.3" fill="#f8f8f8" stroke="#4a4a4a" stroke-width="1.3"/>
<path d="M771.7 111.3L775.0 114.5L778.3 111.3" stroke="#4a4a4a" stroke-width="1.2" stroke-linecap="round" stroke-linejoin="round"/>
<rect x="817.6" y="53.6" width="21.8" height="21.8" fill="#f9dc8f" stroke="#e8731e" stroke-width="1.2"/><rect x="813.2" y="49.1" width="12.2" height="12" fill="#fafafa" stroke="#6a6a6a" stroke-width="1.5"/><rect x="831.6" y="67.9" width="12.4" height="11.8" fill="#fafafa" stroke="#6a6a6a" stroke-width="1.5"/>
<path d="M824.6 111.3L827.9 114.5L831.2 111.3" stroke="#4a4a4a" stroke-width="1.2" stroke-linecap="round" stroke-linejoin="round"/>
<rect x="869.1" y="49.1" width="31.2" height="30.6" rx="3" fill="#f4f4f4" stroke="#b3b3b3" stroke-width="1.6"/><path d="M902.8 59.8C897.6 63 890.6 70 886.8 74.4L890.2 77.6C894.8 73 900.8 65.6 902.8 59.8Z" fill="#dedede" stroke="#b3b3b3" stroke-width="1"/><path d="M886.6 74.2L890.6 77.8C890.4 81.6 884.4 83.2 876.6 81.6C880.8 80 883 76.6 886.6 74.2Z" fill="#bcbcbc" stroke="#fdfdfd" stroke-width=".7"/>
<path d="M899.9 111.4L902.8 114.3L905.7 111.4" stroke="#b3b3b3" stroke-width="1.2" stroke-linecap="round" stroke-linejoin="round"/>
<rect x="917.1" y="60.2" width="17.8" height="4.5" fill="#c4c4c4"/><path d="M920 54.4L925.6 48.8L930.6 53.8L925 59.4Z" fill="#f4f4f4" stroke="#b3b3b3" stroke-width="1.1" stroke-linejoin="round"/><path d="M925.8 51.6V47.6C925.8 46.6 924 46.6 924 47.6V50.6" stroke="#b3b3b3" stroke-width="1"/><path d="M931 53.6C932.8 55 932.6 57.4 931.8 58.6C931 57.4 930.4 55.6 931 53.6Z" fill="#b3b3b3"/>
<path d="M948.6 54.2L951.9 57.4L955.2 54.2" stroke="#b3b3b3" stroke-width="1.2" stroke-linecap="round" stroke-linejoin="round"/>
<rect x="917.1" y="88.2" width="17.8" height="4.5" fill="#c4c4c4"/><path d="M926 77.6H918.8V86.6H922" stroke="#b3b3b3" stroke-width="1.1"/><path d="M924.6 86L925.6 83.2L931.4 77.8C932.2 77.2 933.8 78.6 933.2 79.4L927.4 85Z" fill="#f4f4f4" stroke="#b3b3b3" stroke-width="1" stroke-linejoin="round"/>
<path d="M948.6 82.5L951.9 85.7L955.2 82.5" stroke="#b3b3b3" stroke-width="1.2" stroke-linecap="round" stroke-linejoin="round"/>
<path d="M918.6 113.2L922.4 105.6H931.6L933.4 109.6L929.4 117.8H920.4Z" fill="#f2f2f2" stroke="#9c9c9c" stroke-width="1.1" stroke-linejoin="round"/><path d="M918.8 113.4H929.6L933.2 109.8M929.6 113.4V117.6" stroke="#9c9c9c" stroke-width="1"/><path d="M919.2 113.6H929.4V117.6H920.6Z" fill="#cfcfcf"/>
<path d="M941.7 110.3L945.0 113.5L948.3 110.3" stroke="#b3b3b3" stroke-width="1.2" stroke-linecap="round" stroke-linejoin="round"/>
<path d="M958.2 131.70000000000002H965.3" stroke="#a6a6a6" stroke-width="1.1"/><path d="M958.6 132.4V139.0" stroke="#a6a6a6" stroke-width=".5" opacity=".35"/><path d="M960.5 134.20000000000002L965.5 139.0M960.5 139.4H965.9V134.0" stroke="#a6a6a6" stroke-width="1.1" stroke-linejoin="miter"/>
<circle cx="1005.7" cy="58.2" r="11.8" fill="#f8f8f8" stroke="#4a4a4a" stroke-width="1.3"/><path d="M997 66.8L984.6 79.2" stroke="#4a4a4a" stroke-width="1.4" stroke-linecap="round"/>
<path d="M997.7 109.7L1001.0 112.9L1004.3 109.7" stroke="#4a4a4a" stroke-width="1.2" stroke-linecap="round" stroke-linejoin="round"/>
<rect x="1056.6" y="47.5" width="13.4" height="24.5" rx="6.7" fill="#83bdea" stroke="#1e7fd0" stroke-width="1.4"/><path d="M1053.3 65.4C1053.3 79 1073.5 79 1073.5 65.4M1063.4 75.6V81.6" stroke="#4a4a4a" stroke-width="1.3" stroke-linecap="round"/>
<path d="M1059.7 111.3L1063.0 114.5L1066.3 111.3" stroke="#4a4a4a" stroke-width="1.2" stroke-linecap="round" stroke-linejoin="round"/>
<rect x="1114.4" y="48.4" width="32.2" height="32" stroke="#e8731e" stroke-width="1.6"/>
<rect x="1116.9" y="50.9" width="12.4" height="12" rx="1" stroke="#e8731e" stroke-width="1.1"/><rect x="1118.1000000000001" y="52.1" width="10" height="9.6" rx=".6" stroke="#f5c3a0" stroke-width=".8"/>
<rect x="1116.9" y="65.9" width="12.4" height="12" rx="1" stroke="#e8731e" stroke-width="1.1"/><rect x="1118.1000000000001" y="67.10000000000001" width="10" height="9.6" rx=".6" stroke="#f5c3a0" stroke-width=".8"/>
<rect x="1131.8" y="50.9" width="12.4" height="12" rx="1" stroke="#e8731e" stroke-width="1.1"/><rect x="1133.0" y="52.1" width="10" height="9.6" rx=".6" stroke="#f5c3a0" stroke-width=".8"/>
<rect x="1131.8" y="65.9" width="12.4" height="12" rx="1" stroke="#e8731e" stroke-width="1.1"/><rect x="1133.0" y="67.10000000000001" width="10" height="9.6" rx=".6" stroke="#f5c3a0" stroke-width=".8"/>
<rect x="1186.8" y="52.5" width="31.2" height="23.6" fill="#f8f8f8" stroke="#6c6c6c" stroke-width="1.4"/>
<rect x="1187.9" y="53.6" width="29.0" height="21.4" stroke="#c8c8c8" stroke-width="1"/>
<path d="M1195 60.2H1217M1208.8 60.2V75.6" stroke="#7a7a7a" stroke-width="1.3"/><rect x="1183" y="45" width="12" height="12" fill="#fefefe"/><rect x="1184" y="56" width="6" height="10" fill="#fefefe"/>
<path d="M1190.6 46.6H1198.6L1194.2 54H1198.2L1184.8 68.8L1189.2 57.8H1184.8Z" fill="#f9d27a" stroke="#e8731e" stroke-width="1.1" stroke-linejoin="round"/>
</svg>

<div class="t" style="left:301.1px;top:71.8px;font-size:17.6px;line-height:21.1px;color:#a3a3a3;transform-origin:0 0;transform:scaleX(0.797);font-weight:bold;">B</div>
<div class="t" style="left:329.6px;top:71.5px;font-size:18px;line-height:21.6px;color:#a3a3a3;font-style:italic;font-family:'Liberation Serif',serif">I</div>
<div class="t" style="left:357.0px;top:72.0px;font-size:17px;line-height:20.4px;color:#a3a3a3;transform-origin:0 0;transform:scaleX(0.825);">U</div>
<div class="t" style="left:386.0px;top:71.8px;font-size:17.6px;line-height:21.1px;color:#a3a3a3;transform-origin:0 0;transform:scaleX(0.666);text-shadow:.8px .8px 0 #d9d9d9;">S</div>
<div class="t" style="left:410.2px;top:73.6px;font-size:15.5px;line-height:18.6px;color:#a3a3a3;transform-origin:0 0;transform:scaleX(0.883);">ab</div>
<div class="t" style="left:438.4px;top:72.5px;font-size:11.6px;line-height:13.9px;color:#a3a3a3;transform-origin:0 0;transform:scaleX(1.067);">AV</div>
<div class="t" style="left:345.2px;top:99.8px;font-size:15.6px;line-height:18.7px;color:#a3a3a3;transform-origin:0 0;transform:scaleX(0.938);">A</div>
<div class="t" style="left:386.0px;top:102.2px;font-size:14.2px;line-height:17.0px;color:#a3a3a3;transform-origin:0 0;transform:scaleX(0.931);">Aa</div>
<div class="t" style="left:434.5px;top:99.8px;font-size:17.6px;line-height:21.1px;color:#a3a3a3;transform-origin:0 0;transform:scaleX(0.873);">A</div>
<div class="t" style="left:464.0px;top:102.9px;font-size:14.4px;line-height:17.3px;color:#a3a3a3;transform-origin:0 0;transform:scaleX(0.922);">A</div>
<div class="t" style="left:493.2px;top:99.6px;font-size:16.8px;line-height:20.2px;color:#a3a3a3;transform-origin:0 0;transform:scaleX(0.826);">A</div>
<div class="t" style="left:705.9px;top:45.3px;font-size:12px;line-height:14.4px;color:#a3a3a3;transform-origin:0 0;transform:scaleX(0.908);">A</div>
<div class="t" style="left:15.6px;top:162.0px;font-size:17.5px;line-height:21px;color:#c8581c">1</div>
<div class="t" style="left:14.2px;top:254.0px;font-size:17.5px;line-height:21px;color:#333">2</div>
<div class="t" style="left:12.4px;top:274.6px;font-size:12px;line-height:14px;color:#6a6867;font-family:'DejaVu Sans',sans-serif">★</div>
<div class="t" style="left:14.2px;top:346.0px;font-size:17.5px;line-height:21px;color:#333">3</div>
<div class="t" style="left:12.4px;top:366.6px;font-size:12px;line-height:14px;color:#6a6867;font-family:'DejaVu Sans',sans-serif">★</div>
<div class="t" style="left:13.6px;top:437.9px;font-size:17.5px;line-height:21px;color:#333">4</div>
<div class="t" style="left:12.4px;top:458.5px;font-size:12px;line-height:14px;color:#6a6867;font-family:'DejaVu Sans',sans-serif">★</div>
<div class="t" style="left:14.4px;top:530.0px;font-size:17.5px;line-height:21px;color:#333">5</div>
<div class="t" style="left:12.4px;top:550.6px;font-size:12px;line-height:14px;color:#6a6867;font-family:'DejaVu Sans',sans-serif">★</div>
<div class="t" style="left:14.3px;top:622.1px;font-size:17.5px;line-height:21px;color:#333">6</div>
<div class="t" style="left:12.4px;top:642.7px;font-size:12px;line-height:14px;color:#6a6867;font-family:'DejaVu Sans',sans-serif">★</div>
<div class="abs" style="left:35.8px;top:163px;width:133.4px;height:78px;border:3px solid #7a0a10;border-radius:6px;background:#fdfdfd"></div>
<div class="abs" style="left:40px;top:167px;width:125px;height:70.2px;border-radius:2.5px;overflow:hidden;background:#8bdfa6"><div class="abs" style="left:-40px;top:-167px;width:400px;height:715px">
<svg style="left:39.6px;top:166.4px" width="126" height="71.4" viewBox="365.4 158.4 827.9 466.8" preserveAspectRatio="none"><use href="#art"/></svg>
<div class="t ar" style="left:89.05px;top:191.14px;font-size:13.83px;line-height:16.60px;font-weight:bold;color:#fff;transform-origin:0 0;transform:scaleX(0.778);">زراعة الأسطح</div>
<div class="t ar" style="left:121.0px;top:213.4px;width:41.5px;height:6.4px;overflow:hidden;text-align:right;font-size:4.6px;line-height:6.4px;color:#0d9870;opacity:0.75">مستقبل الزراعة في المدن</div>
</div></div>
<div class="abs" style="left:39.6px;top:258.4px;width:126px;height:71.4px;border-radius:3px;overflow:hidden;background:#8bdfa6;box-shadow:0 0.5px 2px rgba(0,0,0,.35)"><div class="abs" style="left:-39.6px;top:-258.4px;width:400px;height:715px">
<svg style="left:39.6px;top:258.4px" width="126" height="71.4" viewBox="39.6 258.4 126 71.4"><path d="M57.9 267.6L52.6 268.8L54.9 273.7L49.7 272.1L49.2 277.5L45.5 273.5L42.4 277.9L41.2 272.6L36.3 274.9L37.9 269.7L32.5 269.2L36.5 265.5L32.1 262.4L37.4 261.2L35.1 256.3L40.3 257.9L40.8 252.5L44.5 256.5L47.6 252.1L48.8 257.4L53.7 255.1L52.1 260.3L57.5 260.8L53.5 264.5Z" fill="#fdc46a"/><circle cx="45" cy="265" r="7.6" fill="#fde066"/><use href="#man" transform="translate(4.6,270.9) scale(0.0894)"/><path d="M41.5 326.4V323.6M38.9 323.4L41.5 325.2L44.1 323.4M41.5 323.8V321.4" stroke="#0d9870" stroke-width="1.5" fill="none"/><path d="M49 326.4V323.6M46.4 323.4L49 325.2L51.6 323.4M49 323.8V321.4" stroke="#0d9870" stroke-width="1.5" fill="none"/><path d="M56.5 326.4V323.6M53.9 323.4L56.5 325.2L59.1 323.4M56.5 323.8V321.4" stroke="#0d9870" stroke-width="1.5" fill="none"/><path d="M64.5 326.4V323.6M61.9 323.4L64.5 325.2L67.1 323.4M64.5 323.8V321.4" stroke="#0d9870" stroke-width="1.5" fill="none"/><path d="M72.5 326.4V323.6M69.9 323.4L72.5 325.2L75.1 323.4M72.5 323.8V321.4" stroke="#0d9870" stroke-width="1.5" fill="none"/><rect x="39" y="326.5" width="36.6" height="4" fill="#f2904f"/><rect x="39" y="325.9" width="36.6" height="1" fill="#7b5aa6"/><rect x="71.9" y="278.3" width="63.2" height="1.1" fill="#b2ad6c"/></svg>
<div class="t ar" style="left:65.93px;top:266.17px;font-size:9.60px;line-height:11.52px;font-weight:bold;color:#fcfffd;transform-origin:0 0;transform:scaleX(0.648);">مخطط العرض التقديمي</div>
<div class="t ar" style="left:69.0px;top:279.2px;width:19.5px;height:6.4px;overflow:hidden;text-align:right;font-size:4.3px;line-height:6.4px;color:#6a5b98;opacity:0.8">أولاً: المقدمة</div>
<div class="t ar" style="left:118.0px;top:279.2px;width:25.8px;height:6.4px;overflow:hidden;text-align:right;font-size:4.3px;line-height:6.4px;color:#6a5b98;opacity:0.8">المحتويات</div>
<div class="t ar" style="left:68.0px;top:288.4px;width:20.5px;height:6.4px;overflow:hidden;text-align:right;font-size:4.3px;line-height:6.4px;color:#6a5b98;opacity:0.8">ثانياً: العرض</div>
<div class="t ar" style="left:118.0px;top:288.4px;width:26.0px;height:6.4px;overflow:hidden;text-align:right;font-size:4.6px;line-height:6.4px;color:#5a4a90;opacity:0.95">ثالثاً: محاور</div>
<div class="t ar" style="left:106.0px;top:294.8px;width:35.0px;height:6.4px;overflow:hidden;text-align:right;font-size:4.3px;line-height:6.4px;color:#6a5b98;opacity:0.8">• تعريف زراعة الأسطح</div>
<div class="t ar" style="left:109.5px;top:301.8px;width:31.5px;height:6.4px;overflow:hidden;text-align:right;font-size:4.3px;line-height:6.4px;color:#6a5b98;opacity:0.8">• أفكار زراعة الأسطح</div>
<div class="t ar" style="left:100.0px;top:309.3px;width:41.0px;height:6.4px;overflow:hidden;text-align:right;font-size:4.3px;line-height:6.4px;color:#6a5b98;opacity:0.8">• الأدوات والمتطلبات الأساسية</div>
<div class="t ar" style="left:109.5px;top:316.2px;width:31.5px;height:6.4px;overflow:hidden;text-align:right;font-size:4.3px;line-height:6.4px;color:#6a5b98;opacity:0.8">• أنواع النباتات المناسبة</div>
<div class="t ar" style="left:96.0px;top:323.8px;width:45.0px;height:6.4px;overflow:hidden;text-align:right;font-size:4.3px;line-height:6.4px;color:#6a5b98;opacity:0.8">• خطوات البدء في زراعة الأسطح</div>
</div></div>
<div class="abs" style="left:39.6px;top:350.4px;width:126px;height:71.4px;border-radius:3px;overflow:hidden;background:#8bdfa6;box-shadow:0 0.5px 2px rgba(0,0,0,.35)"><div class="abs" style="left:-39.6px;top:-350.4px;width:400px;height:715px">
<svg style="left:39.6px;top:350.4px" width="126" height="71.4" viewBox="39.6 350.4 126 71.4"><path d="M57.9 359.6L52.6 360.8L54.9 365.7L49.7 364.1L49.2 369.5L45.5 365.5L42.4 369.9L41.2 364.6L36.3 366.9L37.9 361.7L32.5 361.2L36.5 357.5L32.1 354.4L37.4 353.2L35.1 348.3L40.3 349.9L40.8 344.5L44.5 348.5L47.6 344.1L48.8 349.4L53.7 347.1L52.1 352.3L57.5 352.8L53.5 356.5Z" fill="#fdc46a"/><circle cx="45" cy="357" r="7.6" fill="#fde066"/><g transform="translate(40.2,374.4)"><path d="M17 8L11.5 46M26 8L33 46M17 8H26M14.8 22H29M13 34H31.5M11.5 45.5H33" stroke="#8d80a8" stroke-width="1.1" fill="none"/><ellipse cx="21.5" cy="19" rx="4" ry="3" fill="#0d9870"/><ellipse cx="19" cy="30" rx="4.5" ry="3.6" fill="#2fae82"/><ellipse cx="26.5" cy="30.5" rx="3.6" ry="3" fill="#0d9870"/><ellipse cx="18" cy="41.5" rx="4" ry="3.4" fill="#0d9870"/><ellipse cx="26.5" cy="41" rx="5" ry="4" fill="#2fae82"/><rect x="15.5" y="42.5" width="5" height="3" fill="#f2904f"/><rect x="19.5" y="21" width="4" height="1.6" fill="#f2904f"/><ellipse cx="4" cy="4.6" rx="3.2" ry="3.6" fill="#5b4a8a"/><ellipse cx="4.4" cy="5.6" rx="2.1" ry="2.4" fill="#fdc76b"/><path d="M0.3 10.5C1.5 8.6 7 8.6 8.6 10.5L9.6 20H0Z" fill="#0d9870"/><path d="M1.2 12H8L9.6 28H0.4Z" fill="#fdd870"/><path d="M0.6 28H9.2L8.6 44H6L5 30L4.2 44H1.6Z" fill="#0d9870"/><rect x="1" y="44" width="3.6" height="1.8" fill="#f2944c"/><rect x="5.8" y="44" width="3.6" height="1.8" fill="#f2944c"/><ellipse cx="10.5" cy="14" rx="2.6" ry="3.6" fill="#2fae82"/></g></svg>
<div class="t ar" style="left:93.22px;top:351.11px;font-size:11.64px;line-height:13.97px;font-weight:bold;color:#fde066;transform-origin:0 0;transform:scaleX(0.548);">مقدمة</div>
<div class="t ar" style="left:72.5px;top:366.4px;width:87.3px;height:6.4px;overflow:hidden;text-align:right;font-size:4.3px;line-height:6.4px;color:#6a5b98;opacity:0.8">في ظل التمدد العمراني المتسارع وقلة المساحات الخضراء تبرز</div>
<div class="t ar" style="left:72.5px;top:374.8px;width:87.3px;height:6.4px;overflow:hidden;text-align:right;font-size:4.3px;line-height:6.4px;color:#6a5b98;opacity:0.8">زراعة الأسطح كحل مبتكر يجمع بين الجمال والفائدة في المدن الحديثة</div>
<div class="t ar" style="left:76.8px;top:383.3px;width:83.0px;height:6.4px;overflow:hidden;text-align:right;font-size:4.3px;line-height:6.4px;color:#6a5b98;opacity:0.8">وتحويل المساحات المهملة إلى حدائق منتجة تسهم في</div>
<div class="t ar" style="left:141.0px;top:391.3px;width:18.8px;height:6.4px;overflow:hidden;text-align:right;font-size:4.3px;line-height:6.4px;color:#6a5b98;opacity:0.8">تحسين جودة الحياة</div>
<div class="t ar" style="left:69.2px;top:399.4px;width:90.6px;height:6.4px;overflow:hidden;text-align:right;font-size:4.3px;line-height:6.4px;color:#6a5b98;opacity:0.8">وتوفير غذاء طازج وصحي وتقليل درجات الحرارة وتنقية الهواء</div>
<div class="t ar" style="left:72.5px;top:407.2px;width:87.3px;height:6.4px;overflow:hidden;text-align:right;font-size:4.3px;line-height:6.4px;color:#6a5b98;opacity:0.8">كما تساهم في تعزيز الوعي البيئي لدى السكان وتشجع الاستدامة</div>
<div class="t ar" style="left:136.0px;top:415.0px;width:23.8px;height:6.4px;overflow:hidden;text-align:right;font-size:4.3px;line-height:6.4px;color:#6a5b98;opacity:0.8">وتحسين المشهد العام</div>
</div></div>
<div class="abs" style="left:39.6px;top:442.3px;width:126px;height:71.4px;border-radius:3px;overflow:hidden;background:#8bdfa6;box-shadow:0 0.5px 2px rgba(0,0,0,.35)"><div class="abs" style="left:-39.6px;top:-442.3px;width:400px;height:715px">
<svg style="left:39.6px;top:442.3px" width="126" height="71.4" viewBox="39.6 442.3 126 71.4"><path d="M57.9 451.6L52.6 452.8L54.9 457.7L49.7 456.1L49.2 461.5L45.5 457.5L42.4 461.9L41.2 456.6L36.3 458.9L37.9 453.7L32.5 453.2L36.5 449.5L32.1 446.4L37.4 445.2L35.1 440.3L40.3 441.9L40.8 436.5L44.5 440.5L47.6 436.1L48.8 441.4L53.7 439.1L52.1 444.3L57.5 444.8L53.5 448.5Z" fill="#fdc46a"/><circle cx="45" cy="449" r="7.6" fill="#fde066"/><g transform="translate(40.2,466.4)"><path d="M17 8L11.5 46M26 8L33 46M17 8H26M14.8 22H29M13 34H31.5M11.5 45.5H33" stroke="#8d80a8" stroke-width="1.1" fill="none"/><ellipse cx="21.5" cy="19" rx="4" ry="3" fill="#0d9870"/><ellipse cx="19" cy="30" rx="4.5" ry="3.6" fill="#2fae82"/><ellipse cx="26.5" cy="30.5" rx="3.6" ry="3" fill="#0d9870"/><ellipse cx="18" cy="41.5" rx="4" ry="3.4" fill="#0d9870"/><ellipse cx="26.5" cy="41" rx="5" ry="4" fill="#2fae82"/><rect x="15.5" y="42.5" width="5" height="3" fill="#f2904f"/><rect x="19.5" y="21" width="4" height="1.6" fill="#f2904f"/><ellipse cx="4" cy="4.6" rx="3.2" ry="3.6" fill="#5b4a8a"/><ellipse cx="4.4" cy="5.6" rx="2.1" ry="2.4" fill="#fdc76b"/><path d="M0.3 10.5C1.5 8.6 7 8.6 8.6 10.5L9.6 20H0Z" fill="#0d9870"/><path d="M1.2 12H8L9.6 28H0.4Z" fill="#fdd870"/><path d="M0.6 28H9.2L8.6 44H6L5 30L4.2 44H1.6Z" fill="#0d9870"/><rect x="1" y="44" width="3.6" height="1.8" fill="#f2944c"/><rect x="5.8" y="44" width="3.6" height="1.8" fill="#f2944c"/><ellipse cx="10.5" cy="14" rx="2.6" ry="3.6" fill="#2fae82"/></g></svg>
<div class="t ar" style="left:68.73px;top:446.28px;font-size:7.83px;line-height:9.40px;font-weight:bold;color:#fde066;transform-origin:0 0;transform:scaleX(0.849);">تعريف زراعة الأسطح</div>
<div class="t ar" style="left:70.0px;top:459.0px;width:89.8px;height:6.4px;overflow:hidden;text-align:right;font-size:4.3px;line-height:6.4px;color:#6a5b98;opacity:0.8">زراعة الأسطح هي ممارسة زراعة النباتات على أسطح المباني السكنية</div>
<div class="t ar" style="left:76.8px;top:466.8px;width:80.2px;height:6.4px;overflow:hidden;text-align:right;font-size:4.3px;line-height:6.4px;color:#6a5b98;opacity:0.8">والتجارية باستخدام أحواض أو أوعية خاصة وتشمل الخضروات</div>
<div class="t ar" style="left:70.0px;top:475.1px;width:89.8px;height:6.4px;overflow:hidden;text-align:right;font-size:4.3px;line-height:6.4px;color:#6a5b98;opacity:0.8">والأعشاب والزهور وأشجار الفاكهة الصغيرة وتعد وسيلة فعالة لاستغلال</div>
<div class="t ar" style="left:70.0px;top:482.8px;width:89.8px;height:6.4px;overflow:hidden;text-align:right;font-size:4.3px;line-height:6.4px;color:#6a5b98;opacity:0.8">المساحات غير المستخدمة في المدن وتحويلها إلى مساحات خضراء</div>
<div class="t ar" style="left:115.8px;top:491.0px;width:44.0px;height:6.4px;overflow:hidden;text-align:right;font-size:4.3px;line-height:6.4px;color:#6a5b98;opacity:0.8">منتجة تعود بالنفع على السكان</div>
<div class="t ar" style="left:70.0px;top:499.3px;width:89.8px;height:6.4px;overflow:hidden;text-align:right;font-size:4.3px;line-height:6.4px;color:#6a5b98;opacity:0.8">وتساهم في تحسين البيئة وتقليل استهلاك الطاقة وتوفير الغذاء الطازج</div>
<div class="t ar" style="left:129.6px;top:507.0px;width:30.2px;height:6.4px;overflow:hidden;text-align:right;font-size:4.3px;line-height:6.4px;color:#6a5b98;opacity:0.8">وتجميل المظهر الحضري</div>
</div></div>
<div class="abs" style="left:39.6px;top:534.4px;width:126px;height:71.4px;border-radius:3px;overflow:hidden;background:#8bdfa6;box-shadow:0 0.5px 2px rgba(0,0,0,.35)"><div class="abs" style="left:-39.6px;top:-534.4px;width:400px;height:715px">
<svg style="left:39.6px;top:534.4px" width="126" height="71.4" viewBox="39.6 534.4 126 71.4"><path d="M64.5 547.5L58.6 549.3L61.9 554.5L55.8 553.1L56.0 559.3L51.5 555.1L48.5 560.5L46.7 554.6L41.5 557.9L42.9 551.8L36.7 552.0L40.9 547.5L35.5 544.5L41.4 542.7L38.1 537.5L44.2 538.9L44.0 532.7L48.5 536.9L51.5 531.5L53.3 537.4L58.5 534.1L57.1 540.2L63.3 540.0L59.1 544.5Z" fill="#fdc46a"/><circle cx="50" cy="546" r="8.2" fill="#fde066"/><path d="M168.0 547.5L162.1 549.3L165.4 554.5L159.3 553.1L159.5 559.3L155.0 555.1L152.0 560.5L150.2 554.6L145.0 557.9L146.4 551.8L140.2 552.0L144.4 547.5L139.0 544.5L144.9 542.7L141.6 537.5L147.7 538.9L147.5 532.7L152.0 536.9L155.0 531.5L156.8 537.4L162.0 534.1L160.6 540.2L166.8 540.0L162.6 544.5Z" fill="#fdc46a"/><circle cx="153.5" cy="546" r="8.2" fill="#fde066"/><g transform="translate(40.4,578.6)"><ellipse cx="4" cy="3.6" rx="3" ry="3.4" fill="#7b5aa6"/><ellipse cx="4.4" cy="4.4" rx="1.8" ry="2" fill="#fdc76b"/><path d="M1 8C2 6.6 7 6.6 8 8L8.6 17H0.6Z" fill="#2bb3a0"/><path d="M1 17H8.4L7.6 26H5.4L4.6 19L3.8 26H1.8Z" fill="#3f7fc0"/><ellipse cx="13" cy="19" rx="4" ry="4.6" fill="#2fae82"/><ellipse cx="19" cy="21" rx="4.4" ry="4" fill="#0d9870"/><ellipse cx="25" cy="22.5" rx="3.2" ry="3" fill="#2fae82"/><ellipse cx="9" cy="22" rx="2.6" ry="3" fill="#39c0a0"/><rect x="10.5" y="23.6" width="6" height="2.6" fill="#f2904f"/><rect x="17" y="24.4" width="5" height="1.8" fill="#7b5aa6"/></g><g transform="translate(164.8,578.6) scale(-1,1)"><ellipse cx="4" cy="3.6" rx="3" ry="3.4" fill="#7b5aa6"/><ellipse cx="4.4" cy="4.4" rx="1.8" ry="2" fill="#fdc76b"/><path d="M1 8C2 6.6 7 6.6 8 8L8.6 17H0.6Z" fill="#2bb3a0"/><path d="M1 17H8.4L7.6 26H5.4L4.6 19L3.8 26H1.8Z" fill="#3f7fc0"/><ellipse cx="13" cy="19" rx="4" ry="4.6" fill="#2fae82"/><ellipse cx="19" cy="21" rx="4.4" ry="4" fill="#0d9870"/><ellipse cx="25" cy="22.5" rx="3.2" ry="3" fill="#2fae82"/><ellipse cx="9" cy="22" rx="2.6" ry="3" fill="#39c0a0"/><rect x="10.5" y="23.6" width="6" height="2.6" fill="#f2904f"/><rect x="17" y="24.4" width="5" height="1.8" fill="#7b5aa6"/></g><defs><linearGradient id="ph" x1="0" y1="0" x2="0" y2="1"><stop offset="0" stop-color="#c9cdd0"/><stop offset=".35" stop-color="#8f9493"/><stop offset=".7" stop-color="#5c5f60"/><stop offset="1" stop-color="#878886"/></linearGradient><linearGradient id="rf" x1="0" y1="0" x2="0" y2="1"><stop offset="0" stop-color="#7f8483" stop-opacity=".45"/><stop offset="1" stop-color="#8bdfa6" stop-opacity="0"/></linearGradient></defs><rect x="83.8" y="570.2" width="37" height="26" rx="1.6" fill="url(#ph)"/><path d="M84 576L96 573L105 575L120.6 572V570.4H84Z" fill="#dfe3e6"/><path d="M86 590L100 580L118 586L120 595H86Z" fill="#3f4143"/><path d="M90 586L104 579L112 582" stroke="#b8bcbb" stroke-width="1.4" fill="none"/><circle cx="95" cy="591" r=".8" fill="#c33"/><circle cx="103" cy="592" r=".8" fill="#c33"/><circle cx="99" cy="589.6" r=".7" fill="#c33"/><rect x="83.8" y="596.4" width="37" height="6.4" fill="url(#rf)"/></svg>
<div class="t ar" style="left:69.52px;top:540.27px;font-size:7.00px;line-height:8.40px;font-weight:bold;color:#fde066;transform-origin:0 0;transform:scaleX(0.985);">بعض الصور للأسطح</div>
<div class="t ar" style="left:87.60px;top:554.14px;font-size:8.12px;line-height:9.74px;font-weight:bold;color:#fde066;transform-origin:0 0;transform:scaleX(0.819);">المزروعة</div>
</div></div>
<div class="abs" style="left:39.6px;top:626.5px;width:126px;height:63.5px;border-radius:3px;overflow:hidden;background:#8bdfa6;box-shadow:0 0.5px 2px rgba(0,0,0,.35)"><div class="abs" style="left:-39.6px;top:-626.5px;width:400px;height:715px">
<svg style="left:39.6px;top:626.5px" width="126" height="63.5" viewBox="39.6 626.5 126 63.5"><path d="M57.9 635.6L52.6 636.8L54.9 641.7L49.7 640.1L49.2 645.5L45.5 641.5L42.4 645.9L41.2 640.6L36.3 642.9L37.9 637.7L32.5 637.2L36.5 633.5L32.1 630.4L37.4 629.2L35.1 624.3L40.3 625.9L40.8 620.5L44.5 624.5L47.6 620.1L48.8 625.4L53.7 623.1L52.1 628.3L57.5 628.8L53.5 632.5Z" fill="#fdc46a"/><circle cx="45" cy="633" r="7.6" fill="#fde066"/><rect x="50.5" y="656.6" width="110.5" height="34" fill="#b4ebc4"/><path d="M50.5 668.8H161M50.5 685.3H161M128 656.6V690" stroke="#d9f5e0" stroke-width=".7" fill="none"/></svg>
<div class="t ar" style="left:73.43px;top:631.26px;font-size:6.33px;line-height:7.60px;font-weight:bold;color:#fde066;transform-origin:0 0;transform:scaleX(0.981);">الأدوات والمتطلبات</div>
<div class="t ar" style="left:87.36px;top:646.47px;font-size:7.32px;line-height:8.79px;font-weight:bold;color:#fde066;transform-origin:0 0;transform:scaleX(0.858);">الأساسية؟</div>
<div class="t ar" style="left:56px;top:656.2px;width:68px;height:6.4px;overflow:hidden;text-align:center;font-size:4px;line-height:6.4px;color:#6a5b98;opacity:.8">مثل الصناديق الخشبية أو الأواني البلاستيكية</div>
<div class="t ar" style="left:133px;top:656.2px;width:23px;height:6.4px;overflow:hidden;text-align:center;font-size:4px;line-height:6.4px;color:#6a5b98;opacity:.8">أحواض الزراعة</div>
<div class="t ar" style="left:82px;top:662.0px;width:18px;height:6.4px;overflow:hidden;text-align:center;font-size:4px;line-height:6.4px;color:#6a5b98;opacity:.8">والأكياس الزراعية</div>
<div class="t ar" style="left:57px;top:667.8px;width:69px;height:6.4px;overflow:hidden;text-align:center;font-size:4px;line-height:6.4px;color:#6a5b98;opacity:.8">يفضل استخدام تربة خفيفة الوزن غنية بالعناصر</div>
<div class="t ar" style="left:135px;top:667.8px;width:19px;height:6.4px;overflow:hidden;text-align:center;font-size:4px;line-height:6.4px;color:#6a5b98;opacity:.8">تربة مناسبة</div>
<div class="t ar" style="left:52px;top:674.0px;width:74px;height:6.4px;overflow:hidden;text-align:center;font-size:4px;line-height:6.4px;color:#6a5b98;opacity:.8">ضروري لمنع تجمع المياه وحماية السطح من التسرب</div>
<div class="t ar" style="left:138px;top:674.0px;width:14px;height:6.4px;overflow:hidden;text-align:center;font-size:4px;line-height:6.4px;color:#6a5b98;opacity:.8">نظام ري</div>
<div class="t ar" style="left:72px;top:679.2px;width:38px;height:6.4px;overflow:hidden;text-align:center;font-size:4px;line-height:6.4px;color:#6a5b98;opacity:.8">مع طبقة عازلة للماء</div>
<div class="t ar" style="left:62px;top:684.8px;width:55px;height:6.4px;overflow:hidden;text-align:center;font-size:4px;line-height:6.4px;color:#6a5b98;opacity:.8">تختار حسب المناخ والمساحة المتاحة</div>
<div class="t ar" style="left:134px;top:684.8px;width:22px;height:6.4px;overflow:hidden;text-align:center;font-size:4px;line-height:6.4px;color:#6a5b98;opacity:.8">بذور وشتلات</div>
</div></div>

<!-- vertical scrollbar of thumbnail pane -->
<div class="abs" style="left:187.4px;top:149px;width:16.2px;height:541px;background:#f5f5f4;border-radius:8px"></div>
<div class="abs" style="left:191px;top:163.7px;width:9px;height:358.7px;background:#737373;border-radius:4.5px"></div>
<svg style="left:187px;top:149px" width="17" height="541" viewBox="187 149 17 541"><path d="M190.8 158.6L195.5 151.6L200.3 158.6Z" fill="#737373"/><path d="M191 678.2L200.2 678.2L195.6 685.2Z" fill="#737373"/></svg>
<div class="abs" style="left:207px;top:148px;width:1px;height:541px;background:#d3ceca"></div>
<!-- horizontal scrollbar -->
<div class="abs" style="left:210px;top:636.2px;width:1040px;height:16.5px;background:#f5f5f4;border-radius:8.3px"></div>
<div class="abs" style="left:227px;top:640px;width:1030px;height:9px;background:#737373;border-radius:4.5px"></div>
<svg style="left:214px;top:638px" width="10" height="14" viewBox="214 638 10 14"><path d="M222.2 640.2L222.2 648.8L215 644.5Z" fill="#737373"/></svg>
<div class="abs" style="left:210px;top:656px;width:1027px;height:1px;background:#d3ceca"></div>
<!-- notes -->
<div class="t" style="left:220.0px;top:664.9px;font-size:16px;line-height:19.2px;letter-spacing:-0.07px;color:#5a5856;">Click to add notes</div>
<div class="abs" style="left:0;top:690px;width:1237px;height:25px;background:#f4f4f3"></div>
<div class="abs" style="left:975px;top:690.5px;width:42px;height:24.5px;background:#dddbd9"></div>
<div class="t" style="left:12.2px;top:695.5px;font-size:12.5px;line-height:15.0px;letter-spacing:-0.48px;color:#333;">Slide 1 of 8</div>
<div class="t" style="left:101.4px;top:695.5px;font-size:12.5px;line-height:15.0px;letter-spacing:-0.47px;color:#333;">English (United States)</div>
<div class="t" style="left:256.0px;top:695.6px;font-size:12px;line-height:14.4px;letter-spacing:-0.30px;color:#333;font-weight:bold;">Accessibility: Investigate</div>
<div class="t" style="left:925.5px;top:695.5px;font-size:12.5px;line-height:15.0px;letter-spacing:-0.43px;color:#333;">Notes</div>
<div class="t ar" style="left:542px;top:664.4px;font-size:27px;line-height:32.4px;color:#3a2a20;opacity:.075;font-weight:bold;transform-origin:0 0;transform:scale(1.52,1.4)">خمسات</div>
<svg style="left:0;top:690px" width="1237" height="25" viewBox="0 690 1237 25" fill="none" stroke="#3b3a39" stroke-width="1.1">
<!-- accessibility icon -->
<circle cx="243.5" cy="696.6" r="2.1"/>
<path d="M237 700.3C240 701.6 247 701.6 250.3 700.3M241.3 701.3L241.3 705L238.3 711.2M245.8 701.3L245.8 704.6L247 706.5M245 706L250.6 711.4M250.6 706L245 711.4" stroke-linecap="round"/>
<!-- notes icon -->
<path d="M906.5 704.5H921M906.5 707.5H921M906.5 710.5H921M909.7 700.6L913.8 697L917.9 700.6" />
<!-- normal view -->
<rect x="988.6" y="696.4" width="15.4" height="12.4" rx="1"/><path d="M991.8 696.4V708.8" /><rect x="994.6" y="699.2" width="6.6" height="4.6" stroke-width="1.3"/>
<!-- sorter -->
<rect x="1030.3" y="696.2" width="6.2" height="5.2"/><rect x="1039.9" y="696.2" width="6.2" height="5.2"/><rect x="1030.3" y="704" width="6.2" height="5.2"/><rect x="1039.9" y="704" width="6.2" height="5.2"/>
<!-- reading view -->
<path d="M1079.7 697.5C1077.5 696 1074.5 695.8 1072.4 696.2V707.6C1074.5 707.2 1077.5 707.4 1079.7 709M1079.7 697.5C1081.9 696 1084.9 695.8 1087 696.2V707.6C1084.9 707.2 1081.9 707.4 1079.7 709M1079.7 697.5V709"/>
<path d="M1074.3 699.3H1077.8M1074.3 701.6H1077.8M1074.3 703.9H1077.8M1081.6 699.3H1085.1M1081.6 701.6H1085.1M1081.6 703.9H1085.1" stroke-width=".8"/>
<!-- slideshow -->
<path d="M1114.3 696.3H1128.6M1115.5 696.3V703.3H1127.4V696.3M1121.4 703.3V708.6M1117.6 709H1125.4"/>
<!-- zoom -->
<path d="M1148.8 702.6H1157.6" stroke-width="1.3"/><path d="M1163 702.6H1237" stroke-width="1" stroke="#605e5c"/><path d="M1222.2 698.8V706.4" stroke-width="1" stroke="#605e5c"/>
<rect x="1198.3" y="696.8" width="5" height="11.8" fill="#605e5c" stroke="none"/>
</svg>

</div></body></html>
